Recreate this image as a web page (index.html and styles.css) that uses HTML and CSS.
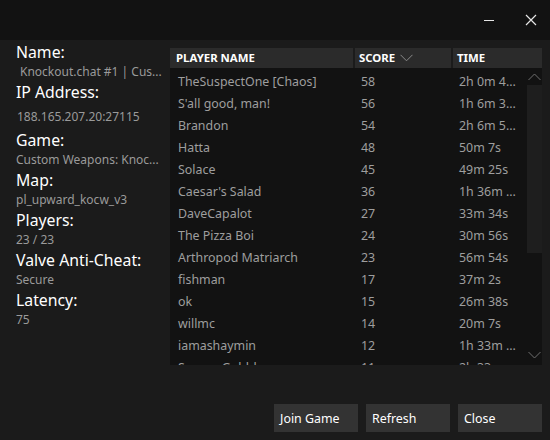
FILE: index.html
```html
<!DOCTYPE html>
<html>
<head>
<meta charset="utf-8">
<link rel="stylesheet" href="styles.css">
</head>
<body>
<div class="window">
  <div class="titlebar">
    <button class="tb-btn" aria-label="Minimize">
      <svg width="12" height="12" viewBox="0 0 12 12"><line x1="1" y1="6.5" x2="11" y2="6.5" stroke="#e6e6e6" stroke-width="1"/></svg>
    </button>
    <button class="tb-btn" aria-label="Close">
      <svg width="12" height="12" viewBox="0 0 12 12"><path d="M1 1 L11 11 M11 1 L1 11" stroke="#e6e6e6" stroke-width="1.2" fill="none"/></svg>
    </button>
  </div>
  <div class="main">
    <div class="info">
      <div class="label">Name:</div>
      <div class="value indent">Knockout.chat #1 | Cus...</div>
      <div class="label">IP Address:</div>
      <div class="value ip">188.165.207.20:27115</div>
      <div class="label">Game:</div>
      <div class="value">Custom Weapons: Knoc...</div>
      <div class="label">Map:</div>
      <div class="value">pl_upward_kocw_v3</div>
      <div class="label">Players:</div>
      <div class="value">23 / 23</div>
      <div class="label">Valve Anti-Cheat:</div>
      <div class="value">Secure</div>
      <div class="label">Latency:</div>
      <div class="value">75</div>
    </div>
    <div class="table">
      <div class="thead">
        <div class="th th-name">PLAYER NAME</div>
        <div class="th th-score">SCORE
          <svg class="sort" width="13" height="8" viewBox="0 0 13 8"><path d="M0.5 0.8 L6.5 6.8 L12.5 0.8" stroke="#8a8a8a" stroke-width="1" fill="none"/></svg>
        </div>
        <div class="th th-time">TIME</div>
      </div>
      <div class="tbody">
        <div class="rows">
          <div class="row"><span>TheSuspectOne [Chaos]</span><span>58</span><span>2h 0m 4...</span></div>
          <div class="row"><span>S'all good, man!</span><span>56</span><span>1h 6m 3...</span></div>
          <div class="row"><span>Brandon</span><span>54</span><span>2h 6m 5...</span></div>
          <div class="row"><span>Hatta</span><span>48</span><span>50m 7s</span></div>
          <div class="row"><span>Solace</span><span>45</span><span>49m 25s</span></div>
          <div class="row"><span>Caesar's Salad</span><span>36</span><span>1h 36m ...</span></div>
          <div class="row"><span>DaveCapalot</span><span>27</span><span>33m 34s</span></div>
          <div class="row"><span>The Pizza Boi</span><span>24</span><span>30m 56s</span></div>
          <div class="row"><span>Arthropod Matriarch</span><span>23</span><span>56m 54s</span></div>
          <div class="row"><span>fishman</span><span>17</span><span>37m 2s</span></div>
          <div class="row"><span>ok</span><span>15</span><span>26m 38s</span></div>
          <div class="row"><span>willmc</span><span>14</span><span>20m 7s</span></div>
          <div class="row"><span>iamashaymin</span><span>12</span><span>1h 33m ...</span></div>
          <div class="row"><span>Samon Gobbler</span><span>11</span><span>2h 33m ...</span></div>
        </div>
        <div class="scrollbar">
          <svg class="arrow" width="13" height="8" viewBox="0 0 13 8"><path d="M0.5 7 L6.5 1 L12.5 7" stroke="#6e6e6e" stroke-width="1" fill="none"/></svg>
          <div class="thumb"></div>
          <div class="track"></div>
          <svg class="arrow down" width="13" height="8" viewBox="0 0 13 8"><path d="M0.5 1 L6.5 7 L12.5 1" stroke="#6e6e6e" stroke-width="1" fill="none"/></svg>
        </div>
      </div>
    </div>
  </div>
  <div class="footer">
    <button class="btn">Join Game</button>
    <button class="btn">Refresh</button>
    <button class="btn">Close</button>
  </div>
</div>
</body>
</html>
```
FILE: styles.css
```css
* { box-sizing: border-box; }
html, body { margin: 0; padding: 0; }
body {
  background: #1b1b1b;
  font-family: "Noto Sans", "Open Sans", sans-serif;
  color: #ffffff;
}
.window {
  width: 550px;
  height: 440px;
  display: flex;
  flex-direction: column;
  background: #1b1b1b;
  overflow: hidden;
}
.titlebar {
  height: 40px;
  background: #121212;
  display: flex;
  justify-content: flex-end;
  align-items: center;
  padding-right: 8px;
  gap: 18px;
  flex: none;
}
.tb-btn {
  background: none;
  border: 0;
  padding: 0;
  width: 22px;
  height: 22px;
  display: flex;
  align-items: center;
  justify-content: center;
}
.tb-btn:first-child { margin-right: 2px; }
.main {
  flex: 1;
  display: flex;
  padding: 0 8px 0 16px;
  min-height: 0;
}
.info {
  width: 154px;
  flex: none;
  padding-top: 2px;
}
.label {
  font-size: 15.8px;
  line-height: 20px;
  color: #ffffff;
  white-space: nowrap;
}
.value {
  font-size: 12px;
  line-height: 20px;
  color: #9a9a9a;
  white-space: nowrap;
}
.value.indent { padding-left: 4px; }
.value.ip { padding: 5px 0 3px 1px; }
.table {
  margin-top: 8px;
  width: 372px;
  height: 317px;
  display: flex;
  flex-direction: column;
}
.thead {
  display: flex;
  gap: 2px;
  height: 20px;
  flex: none;
}
.th {
  background: #2b2b2b;
  font-size: 11.4px;
  font-weight: 700;
  line-height: 20px;
  color: #ffffff;
  padding-left: 4px;
  display: flex;
  align-items: center;
  white-space: nowrap;
}
.th-name { width: 183px; padding-left: 6px; }
.th-score { width: 96px; }
.th-time { flex: 1; }
.sort { margin-left: 5px; margin-top: -1px; }
.tbody {
  flex: 1;
  display: flex;
  background: #121212;
  min-height: 0;
}
.rows {
  flex: 1;
  overflow: hidden;
  padding-top: 2px;
}
.row {
  display: grid;
  grid-template-columns: 185px 98px 1fr;
  height: 22px;
  align-items: center;
  font-size: 12.4px;
  color: #9e9e9e;
  white-space: nowrap;
}
.row span:nth-child(1) { padding-left: 8px; }
.row span:nth-child(2) { padding-left: 6px; }
.row span:nth-child(3) { padding-left: 6px; overflow: hidden; }
.scrollbar {
  width: 15px;
  flex: none;
  display: flex;
  flex-direction: column;
  align-items: center;
}
.arrow { margin: 5px 0 4px; flex: none; }
.arrow.down { margin: 3px 0 6px; }
.thumb {
  width: 15px;
  height: 168px;
  background: #1e1e1e;
  flex: none;
}
.track { flex: 1; }
.footer {
  display: flex;
  justify-content: flex-end;
  gap: 8px;
  padding: 0 8px 8px;
  flex: none;
}
.btn {
  width: 84px;
  height: 28px;
  background: #333333;
  border: 0;
  color: #ffffff;
  font-family: "Noto Sans", "Open Sans", sans-serif;
  font-size: 12.4px;
  text-align: left;
  padding: 0 0 0 6px;
}
```
